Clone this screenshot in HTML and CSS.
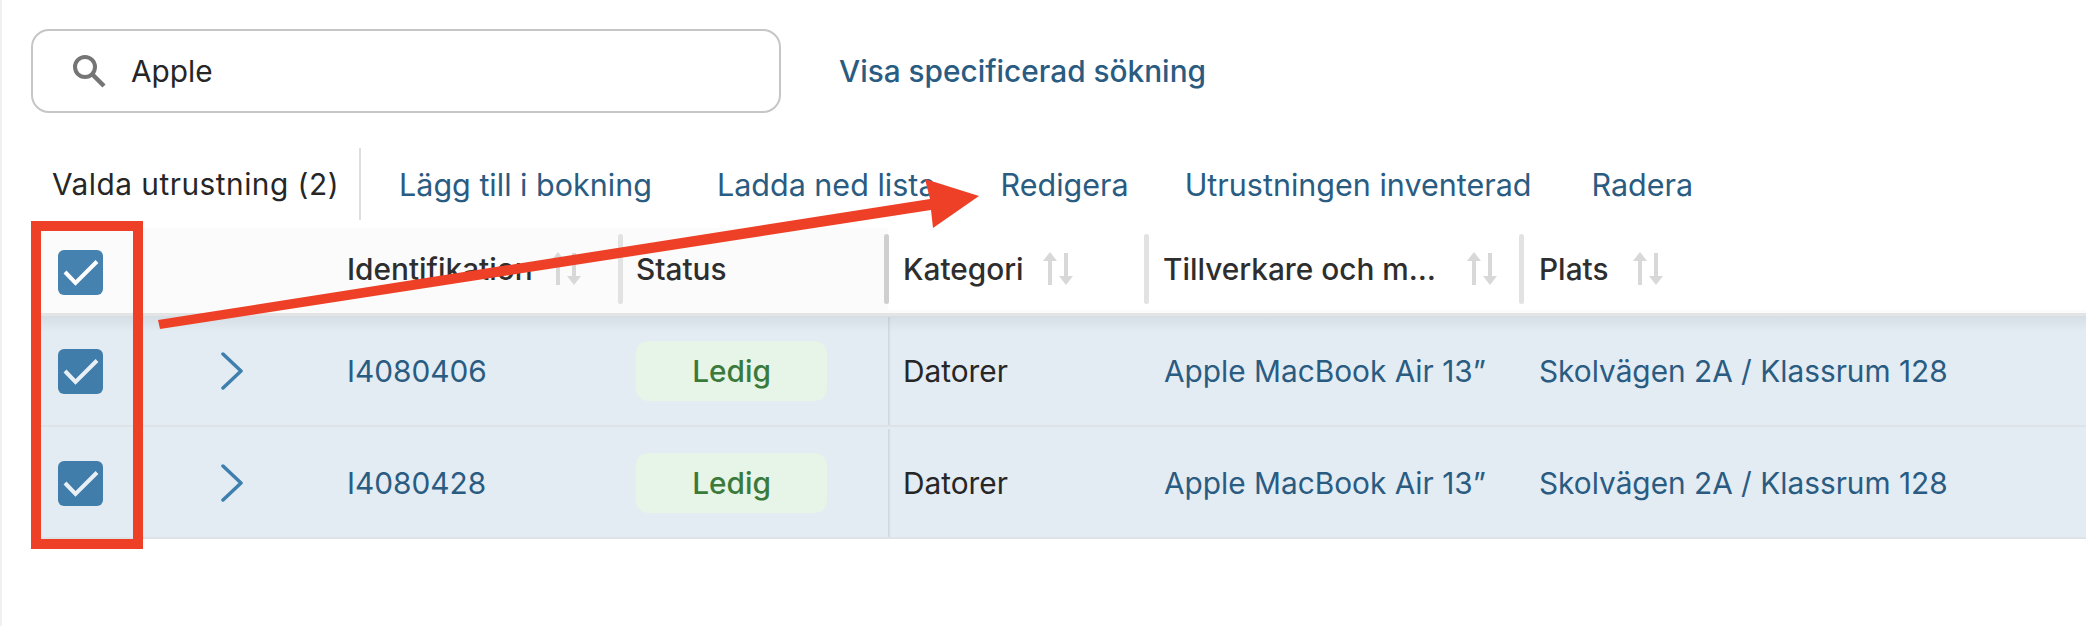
FILE: index.html
```html
<!DOCTYPE html>
<html lang="en">
<head>
    <meta charset="UTF-8">
    <meta name="viewport" content="width=device-width, initial-scale=1.0">
    <title>Utrustning</title>
    <link rel="stylesheet" href="styles.css">
</head>
<body>
    <div class="page">
        <div class="search-row">
            <div class="search-box">
                <svg class="search-icon" viewBox="0 0 34 34" width="34" height="34">
                    <circle cx="13" cy="13" r="10" fill="none" stroke="#757575" stroke-width="4"/>
                    <path d="M20 20 L32 32" stroke="#757575" stroke-width="4.5" fill="none"/>
                </svg>
                <span>Apple</span>
            </div>
            <a href="#" class="search-link">Visa specificerad sökning</a>
        </div>

        <div class="toolbar">
            <span class="selected-count">Valda utrustning (2)</span>
            <a href="#" class="action action-first">Lägg till i bokning</a>
            <a href="#" class="action action-wide">Ladda ned lista</a>
            <a href="#" class="action action-wide">Redigera</a>
            <a href="#" class="action action-narrow">Utrustningen inventerad</a>
            <a href="#" class="action">Radera</a>
        </div>

        <div class="table">
            <div class="table-row table-head">
                <div class="cell cell-check">
                    <svg class="check" viewBox="0 0 45 45" width="45" height="45"><rect width="45" height="45" rx="6"/><path d="M7 22 L17.5 33 L39 11.5"/></svg>
                </div>
                <div class="cell"></div>
                <div class="cell">
                    <span class="head-label">Identifikation</span>
                    <svg class="sort sort-id" viewBox="0 0 30 34" width="30" height="34"><path d="M7 0 L14 9 H9 V33 H5 V9 H0 Z"/><path d="M21 1 H25 V24 H30 L23 33 L16 24 H21 Z"/></svg>
                </div>
                <div class="cell">
                    <span class="resize resize-status"></span>
                    <span class="head-label">Status</span>
                </div>
                <div class="cell cell-white">
                    <span class="resize resize-fixed"></span>
                    <span class="head-label">Kategori</span>
                    <svg class="sort sort-category" viewBox="0 0 30 34" width="30" height="34"><path d="M7 0 L14 9 H9 V33 H5 V9 H0 Z"/><path d="M21 1 H25 V24 H30 L23 33 L16 24 H21 Z"/></svg>
                </div>
                <div class="cell cell-white">
                    <span class="resize resize-maker"></span>
                    <span class="head-label">Tillverkare och m…</span>
                    <svg class="sort sort-maker" viewBox="0 0 30 34" width="30" height="34"><path d="M7 0 L14 9 H9 V33 H5 V9 H0 Z"/><path d="M21 1 H25 V24 H30 L23 33 L16 24 H21 Z"/></svg>
                </div>
                <div class="cell cell-white">
                    <span class="resize"></span>
                    <span class="head-label">Plats</span>
                    <svg class="sort sort-place" viewBox="0 0 30 34" width="30" height="34"><path d="M7 0 L14 9 H9 V33 H5 V9 H0 Z"/><path d="M21 1 H25 V24 H30 L23 33 L16 24 H21 Z"/></svg>
                </div>
            </div>

            <div class="table-row table-item table-item-first">
                <div class="cell cell-check">
                    <svg class="check" viewBox="0 0 45 45" width="45" height="45"><rect width="45" height="45" rx="6"/><path d="M7 22 L17.5 33 L39 11.5"/></svg>
                </div>
                <div class="cell">
                    <svg class="chevron" viewBox="0 0 22 38" width="22" height="38"><path d="M2 2 L20 19 L2 36"/></svg>
                </div>
                <div class="cell"><a href="#" class="item-link">I4080406</a></div>
                <div class="cell cell-status"><span class="badge">Ledig</span></div>
                <div class="cell cell-category">Datorer</div>
                <div class="cell cell-maker"><a href="#" class="item-link">Apple MacBook Air 13”</a></div>
                <div class="cell cell-place"><a href="#" class="item-link">Skolvägen 2A / Klassrum 128</a></div>
            </div>

            <div class="table-row table-item">
                <div class="cell cell-check">
                    <svg class="check" viewBox="0 0 45 45" width="45" height="45"><rect width="45" height="45" rx="6"/><path d="M7 22 L17.5 33 L39 11.5"/></svg>
                </div>
                <div class="cell">
                    <svg class="chevron" viewBox="0 0 22 38" width="22" height="38"><path d="M2 2 L20 19 L2 36"/></svg>
                </div>
                <div class="cell"><a href="#" class="item-link">I4080428</a></div>
                <div class="cell cell-status"><span class="badge">Ledig</span></div>
                <div class="cell cell-category">Datorer</div>
                <div class="cell cell-maker"><a href="#" class="item-link">Apple MacBook Air 13”</a></div>
                <div class="cell cell-place"><a href="#" class="item-link">Skolvägen 2A / Klassrum 128</a></div>
            </div>
        </div>

        <!-- red markup drawn on top of the screenshot -->
        <svg class="annotations" viewBox="0 0 2086 626" width="2086" height="626">
            <rect x="36" y="226" width="102" height="318" fill="none" stroke="#ee4026" stroke-width="10"/>
            <path d="M158 320 L930 199 L925 179 L979 196 L933 228 L931 210 L160 329 Z" fill="#ee4026"/>
        </svg>
    </div>
</body>
</html>
```

FILE: styles.css
```css
body {
    margin: 0;
    font-family: Inter, "Noto Sans", sans-serif;
    font-size: 29.8px;
    color: #262626;
    background-color: #fff;
}

a {
    text-decoration: none;
    color: #2a5c82;
}

.page {
    position: relative;
    height: 626px;
    padding-top: 29px;
    box-sizing: border-box;
    border-left: 2px solid #f0f0f0;
    overflow: hidden;
}

.search-row {
    display: flex;
    align-items: center;
    margin-left: 29px;
}

.search-box {
    display: flex;
    align-items: center;
    width: 750px;
    height: 84px;
    padding-left: 39px;
    box-sizing: border-box;
    border: 2px solid #c6c6c6;
    border-radius: 18px;
}

.search-icon {
    margin-right: 25px;
}

.search-link {
    margin-left: 58px;
    font-weight: 500;
}

.toolbar {
    display: flex;
    align-items: center;
    height: 72px;
    margin-top: 35px;
    margin-left: 50px;
}

.selected-count {
    padding-right: 20px;
    line-height: 72px;
    letter-spacing: 0.5px;
    border-right: 2px solid #dedede;
}

.action {
    margin-left: 60px;
    font-size: 30.5px;
}

.action-first {
    margin-left: 38px;
}

.action-wide {
    margin-left: 65px;
}

.action-narrow {
    margin-left: 56px;
}

.table {
    margin-top: 8px;
    margin-left: 31px;
}

.table-row {
    display: grid;
    grid-template-columns: 88px 226px 271px 270px 256px 375px 1fr;
}

.cell {
    display: flex;
    align-items: center;
}

.cell-check {
    padding-left: 25px;
}

.table-head {
    height: 88px;
    padding-bottom: 3px;
    background-color: #fbfbfb;
    border-bottom: 3px solid #e4e4e4;
    box-sizing: border-box;
}

.table-head .cell-check {
    padding-top: 7px;
}

.cell-white {
    background-color: #fff;
}

.head-label {
    font-weight: 500;
    white-space: nowrap;
    color: #2e2e2e;
}

.resize {
    flex: none;
    width: 5px;
    height: 70px;
    margin-right: 15px;
    border-radius: 3px;
    background-color: #e2e2e2;
}

.resize-status {
    margin-right: 13px;
}

.resize-fixed {
    margin-left: -4px;
    margin-right: 14px;
    background-color: #cfcfcf;
}

.resize-maker {
    margin-right: 14px;
}

.sort {
    flex: none;
    fill: #d8d8d8;
}

.sort-id {
    margin-left: 18px;
}

.sort-category {
    margin-left: 19px;
}

.sort-maker {
    margin-left: 31px;
}

.sort-place {
    margin-left: 25px;
}

.check rect {
    fill: #4682b0;
}

.check path {
    fill: none;
    stroke: #fff;
    stroke-width: 4;
}

.table-item {
    height: 112px;
    padding-top: 2px;
    box-sizing: border-box;
    background-color: #e3ebf3;
    border-bottom: 2px solid #dfe2e6;
}

.table-item-first {
    height: 111px;
    padding-top: 1px;
    background-image: linear-gradient(#d5dde5, #e3ebf3 16px);
}

.table-item .check rect {
    fill: #407dab;
}

.table-item .check path {
    stroke: #e8f0f6;
}

.chevron {
    margin-left: 100px;
}

.chevron path {
    fill: none;
    stroke: #3f7fae;
    stroke-width: 3.5;
    stroke-linecap: round;
    stroke-linejoin: round;
}

.cell-status {
    padding-left: 18px;
}

.cell-category {
    padding-left: 15px;
    background-image: linear-gradient(to right, rgba(60, 80, 100, 0.14), transparent 3px);
}

.cell-maker {
    padding-left: 20px;
}

.cell-place {
    padding-left: 20px;
}

.badge {
    width: 191px;
    height: 60px;
    line-height: 60px;
    text-align: center;
    border-radius: 12px;
    background-color: #e7f4e8;
    color: #3b7a3a;
    font-weight: 500;
}

.annotations {
    position: absolute;
    top: 0;
    left: -2px;
}
```
